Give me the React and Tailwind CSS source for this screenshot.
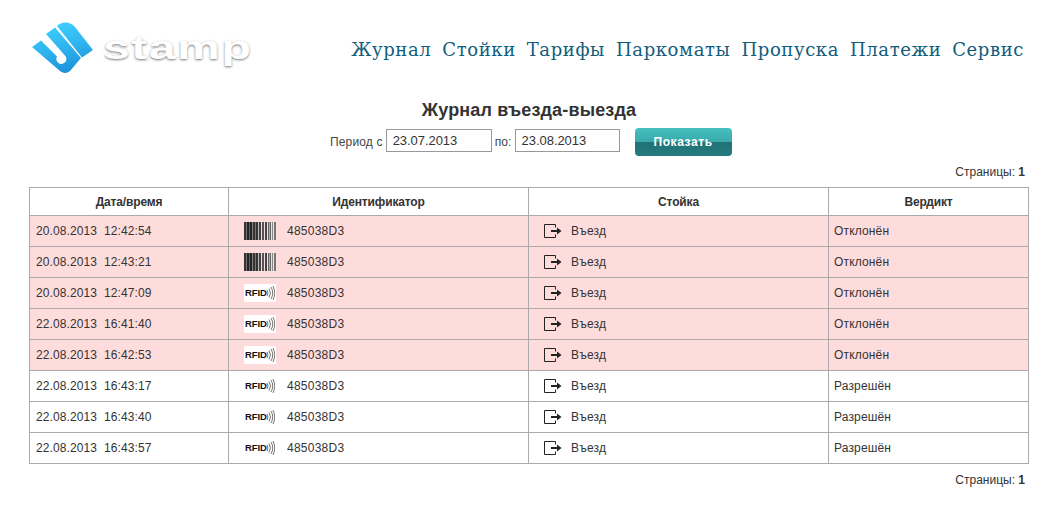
const F = '[font-family:"Liberation_Sans",Arial,sans-serif]';

const rows = [
  ["20.08.2013  12:42:54", "bar", "Отклонён", true],
  ["20.08.2013  12:43:21", "bar", "Отклонён", true],
  ["20.08.2013  12:47:09", "rfid", "Отклонён", true],
  ["22.08.2013  16:41:40", "rfid", "Отклонён", true],
  ["22.08.2013  16:42:53", "rfid", "Отклонён", true],
  ["22.08.2013  16:43:17", "rfid", "Разрешён", false],
  ["22.08.2013  16:43:40", "rfid", "Разрешён", false],
  ["22.08.2013  16:43:57", "rfid", "Разрешён", false],
];

function Logo() {
  return (
    <svg width="62" height="52" viewBox="32 22 62 52" className="block shrink-0">
      <defs>
        <linearGradient id="lg" gradientUnits="userSpaceOnUse" x1="55" y1="22" x2="68" y2="74">
          <stop offset="0" stopColor="#3fd0ff" />
          <stop offset="0.5" stopColor="#2fb4ee" />
          <stop offset="1" stopColor="#1a8fd8" />
        </linearGradient>
      </defs>
      <path d="M57 26 Q60 22.5 66 22.5 Q71 22.5 75 27 L93 50 L82 57.5 Z" fill="url(#lg)" />
      <path d="M32 47 L41 40.5 L57 56.5 A5 5 0 1 0 64.5 55 L46 34 L55 27.5 L81 58 L70 71 Q65 75 60 71 Z" fill="url(#lg)" />
    </svg>
  );
}

function Barcode() {
  const bars = [
    [0,2,"#333"],[2,1,"#777"],[3,2,"#222"],[5,1,"#666"],[6,2,"#222"],[8,1,"#888"],[9,2,"#333"],[11,1,"#777"],[12,2,"#333"],
    [14,1,"#bbb"],[15,2,"#444"],[18,2,"#555"],[21,2,"#444"],[24,1,"#666"],[25,1,"#aaa"],[26,1,"#666"],[28,1,"#888"],[30,2,"#777"],
  ];
  return (
    <svg width="32" height="18" viewBox="0 0 32 18" className="block">
      {bars.map(([x, w, c]) => <rect key={x} x={x} y="0" width={w} height="18" fill={c} />)}
    </svg>
  );
}

function Rfid() {
  return (
    <div className="flex h-[18px] w-[32px] items-center justify-center bg-white">
      <span className={`${F} text-[9.5px] font-bold leading-none tracking-[-0.1px] text-[#111]`}>RFID</span>
      <svg width="9" height="16" viewBox="0 0 9 16" className="-ml-px">
        <path d="M1 5 Q3 8 1 11 M3 3.5 Q6 8 3 12.5 M5 2 Q8.5 8 5 14 M7 1 Q10.5 8 7 15" fill="none" stroke="#666" strokeWidth="0.9" />
      </svg>
    </div>
  );
}

function Exit() {
  return (
    <svg width="18" height="14" viewBox="0 0 18 14" className="block">
      <path d="M11.5 3.5 V0.5 H0.5 V13.5 H11.5 V10.5" fill="none" stroke="#222" strokeWidth="1" />
      <path d="M7 6 H13 V3.5 L17.5 7 L13 10.5 V8 H7 Z" fill="#222" />
    </svg>
  );
}

const cell = "h-[31px] border border-[#aaa] p-0 text-[12px] text-[#333] whitespace-pre";

export default function App() {
  return (
    <div className={`${F} h-[515px] w-[1054px] overflow-hidden bg-white text-[#333]`}>
      <header className="flex h-[97px] items-start justify-between pl-[32px] pr-[30px]">
        <div className="flex items-center pt-[22px]">
          <Logo />
          <span className={`${F} ml-[9px] -mt-[3px] scale-x-[1.42] origin-left text-[34px] font-bold leading-none tracking-[1px] text-white [text-shadow:0_1px_2px_#777]`}>stamp</span>
        </div>
        <nav className={`flex gap-[11px] pt-[38px] [font-family:"DejaVu_Serif",serif] text-[18px] leading-[24px] tracking-[0.6px] text-[#125c7c]`}>
          {["Журнал","Стойки","Тарифы","Паркоматы","Пропуска","Платежи","Сервис"].map(t => <span key={t}>{t}</span>)}
        </nav>
      </header>

      <h1 className="h-[24px] pl-[4px] text-center text-[18px] font-bold leading-[26px] tracking-[0.15px] text-[#333]">Журнал въезда-выезда</h1>

      <div className="mt-[7px] flex items-center pl-[330px] text-[12px] tracking-[0.15px] text-[#444]">
        <span className="mr-[3px]">Период с</span>
        <div className="mb-[3px] flex h-[23px] w-[106px] items-center border border-[#999] pl-[6px] text-[13px] tracking-[-0.05px] text-[#333]">23.07.2013</div>
        <span className="ml-[3px] mr-[3px]">по:</span>
        <div className="mb-[3px] flex h-[23px] w-[105px] items-center border border-[#999] pl-[6px] text-[13px] tracking-[-0.05px] text-[#333]">23.08.2013</div>
        <div className="ml-[15px] flex h-[28px] w-[97px] items-center justify-center rounded-[4px] bg-[linear-gradient(#45c0bf_0%,#3aa9aa_50%,#1f7175_50%,#267c80_100%)] text-[12px] font-bold tracking-[0.6px] text-white">Показать</div>
      </div>

      <div className="mt-[9px] pr-[29px] text-right text-[12px] leading-[14px] text-[#333]">Страницы: <b>1</b></div>

      <table className="ml-[29px] mt-[8px] w-[1000px] table-fixed border-collapse">
        <colgroup>
          <col className="w-[199px]" /><col className="w-[300px]" /><col className="w-[300px]" /><col className="w-[200px]" />
        </colgroup>
        <thead>
          <tr>
            {["Дата/время","Идентификатор","Стойка","Вердикт"].map(h => (
              <th key={h} className="h-[28px] border border-[#aaa] p-0 text-center text-[12px] font-bold tracking-[-0.15px] text-[#333]">{h}</th>
            ))}
          </tr>
        </thead>
        <tbody>
          {rows.map((r, i) => (
            <tr key={i} className={r[3] ? "bg-[#ffdcdc]" : "bg-white"}>
              <td className={`${cell} pl-[6px] tracking-[0.1px]`}>{r[0]}</td>
              <td className={`${cell} tracking-[0.25px]`}>
                <div className="flex items-center pl-[15px]">
                  {r[1] === "bar" ? <Barcode /> : <Rfid />}
                  <span className="ml-[11px]">485038D3</span>
                </div>
              </td>
              <td className={`${cell} tracking-[0.2px]`}>
                <div className="flex items-center pl-[15px]">
                  <Exit />
                  <span className="ml-[9px]">Въезд</span>
                </div>
              </td>
              <td className={`${cell} pl-[5px] tracking-[0.15px]`}>{r[2]}</td>
            </tr>
          ))}
        </tbody>
      </table>

      <div className="mt-[9px] pr-[29px] text-right text-[12px] leading-[14px] text-[#333]">Страницы: <b>1</b></div>
    </div>
  );
}
